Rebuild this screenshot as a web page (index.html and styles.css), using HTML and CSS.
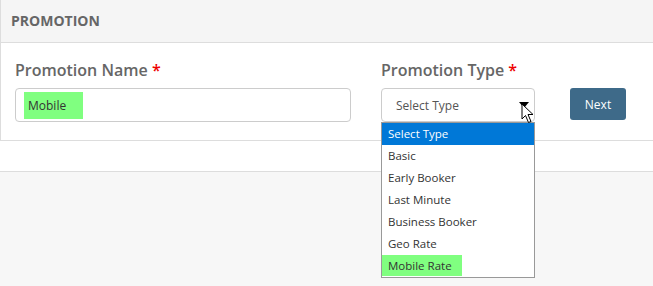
FILE: index.html
```html
<!DOCTYPE html>
<html lang="en">
<head>
  <meta charset="UTF-8">
  <meta name="viewport" content="width=device-width, initial-scale=1.0">
  <title>Promotion</title>
  <link rel="stylesheet" href="styles.css">
</head>
<body>

  <div class="panel">
    <div class="panel-heading">PROMOTION</div>
    <div class="panel-body">
      <div class="field field-name">
        <label>Promotion Name <span class="req">*</span></label>
        <div class="input"><span class="hl">Mobile</span></div>
      </div>
      <div class="field field-type">
        <label>Promotion Type <span class="req">*</span></label>
        <div class="select">
          <span>Select Type</span>
          <span class="arrow"></span>
          <svg class="cursor" width="14" height="22" viewBox="0 0 14 22">
            <path d="M1 1 L1 16 L4.5 12.5 L7.5 19.5 L10 18.5 L7 11.5 L12 11.5 Z" fill="#fff" stroke="#000" stroke-width="1"/>
          </svg>
          <ul class="options">
            <li class="active">Select Type</li>
            <li>Basic</li>
            <li>Early Booker</li>
            <li>Last Minute</li>
            <li>Business Booker</li>
            <li>Geo Rate</li>
            <li><span class="hl">Mobile Rate</span></li>
          </ul>
        </div>
      </div>
      <div class="field field-btn">
        <button type="button">Next</button>
      </div>
    </div>
  </div>
  <div class="spacer"></div>
  <div class="footer"></div>

</body>
</html>
```

FILE: styles.css
```css
body {
  font-family: 'Open Sans', sans-serif;
  background-color: #fff;
  margin: 0;
  padding: 0;
  color: #333;
}

.panel {
  border-left: 1px solid #ddd;
  border-bottom: 1px solid #ddd;
}

.panel-heading {
  height: 43px;
  box-sizing: border-box;
  padding: 11px 10px 0;
  background-color: #f5f5f5;
  border-bottom: 1px solid #ddd;
  font-size: 14px;
  font-weight: 700;
  color: #666;
}

.panel-body {
  display: flex;
  align-items: flex-end;
  padding: 16px 14px 18px;
  height: 97px;
  box-sizing: border-box;
}

.field label {
  display: block;
  font-size: 16px;
  font-weight: 600;
  color: #666;
  line-height: 22px;
  margin-bottom: 7px;
}

.req {
  color: #e00;
}

.field-name {
  width: 336px;
}

.field-type {
  width: 154px;
  margin-left: 30px;
}

.field-btn {
  margin-left: 35px;
  padding-bottom: 2px;
}

.input,
.select {
  height: 34px;
  box-sizing: border-box;
  border: 1px solid #ccc;
  border-radius: 4px;
  font-size: 12px;
  display: flex;
  align-items: center;
}

.input {
  padding-left: 8px;
}

.input .hl {
  display: inline-block;
  background-color: #80ff80;
  color: #333;
  padding: 5px 17px 5px 4px;
  line-height: 17px;
}

.select {
  position: relative;
  padding-left: 14px;
  color: #555;
}

.arrow {
  position: absolute;
  right: 5px;
  top: 13px;
  border-left: 5px solid transparent;
  border-right: 5px solid transparent;
  border-top: 6px solid #000;
}

.cursor {
  position: absolute;
  left: 139px;
  top: 14px;
  z-index: 3;
}

.options {
  position: absolute;
  left: -1px;
  top: 33px;
  width: 154px;
  box-sizing: border-box;
  margin: 0;
  padding: 0;
  list-style: none;
  background-color: #fff;
  border: 1px solid #999;
  z-index: 2;
}

.options li {
  height: 22px;
  line-height: 22px;
  padding-left: 6px;
  font-size: 11.5px;
  color: #333;
}

.options li.active {
  background-color: #0078d7;
  color: #fff;
}

.options li:last-child {
  padding-left: 0;
}

.options .hl {
  display: inline-block;
  background-color: #80ff80;
  padding: 0 10px 0 6px;
  height: 21px;
}

button {
  background-color: #3e6a89;
  color: #fff;
  border: none;
  width: 56px;
  height: 32px;
  font-family: 'Open Sans', sans-serif;
  font-size: 12px;
  border-radius: 3px;
  cursor: pointer;
}

.spacer {
  height: 30px;
  border-bottom: 1px solid #ddd;
}

.footer {
  background-color: #f7f7f7;
  height: 114px;
}
```
